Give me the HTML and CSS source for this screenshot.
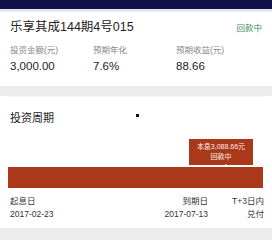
FILE: index.html
```html
<!DOCTYPE html>
<html lang="zh">
<head>
  <meta charset="UTF-8">
  <meta name="viewport" content="width=device-width, initial-scale=1.0">
  <title>乐享其成144期4号015</title>
  <link rel="stylesheet" href="styles.css">
</head>
<body>
  <div class="topbar"></div>

  <div class="card info">
    <div class="title-row">
      <h1>乐享其成144期4号015</h1>
      <span class="status">回款中</span>
    </div>
    <div class="stats">
      <div class="stat">
        <div class="label">投资金额(元)</div>
        <div class="value">3,000.00</div>
      </div>
      <div class="stat">
        <div class="label">预期年化</div>
        <div class="value">7.6%</div>
      </div>
      <div class="stat">
        <div class="label">预期收益(元)</div>
        <div class="value">88.66</div>
      </div>
    </div>
  </div>

  <div class="card period">
    <div class="period-head">
      <h2>投资周期</h2>
      <span class="dot"></span>
    </div>
    <div class="timeline">
      <div class="tip">本息3,088.66元<br>回款中</div>
      <div class="bar"></div>
    </div>
    <div class="dates">
      <div class="date">
        <div>起息日</div>
        <div>2017-02-23</div>
      </div>
      <div class="date end">
        <div>到期日</div>
        <div>2017-07-13</div>
      </div>
      <div class="date pay">
        <div>T+3日内</div>
        <div>兑付</div>
      </div>
    </div>
  </div>
</body>
</html>
```

FILE: styles.css
```css
body {
  margin: 0;
  background: #ececec;
  font-family: "Liberation Sans", "Noto Sans CJK SC", sans-serif;
  color: #222;
}
.topbar {
  height: 9px;
  background: #12124a;
  border-bottom: 2px solid #e4e4ec;
}
.card {
  background: #fff;
  padding: 0 10px;
}
.info {
  margin-top: 1px;
  height: 74px;
  margin-bottom: 10px;
}
.title-row {
  display: flex;
  justify-content: space-between;
  align-items: center;
  padding-top: 6px;
}
h1 {
  margin: 0;
  font-size: 12.5px;
  font-weight: normal;
  line-height: 18px;
}
.status {
  font-size: 8.5px;
  color: #3b8a5c;
}
.stats {
  display: grid;
  grid-template-columns: 83px 83px 1fr;
  margin-top: 8px;
}
.label {
  font-size: 8.5px;
  color: #888;
  line-height: 12px;
}
.value {
  font-size: 11.5px;
  line-height: 16px;
  margin-top: 2px;
}
.period {
  height: 132px;
  padding: 0 8px;
}
.period-head {
  display: flex;
  align-items: center;
  height: 40px;
  padding-left: 2px;
  border-top: 1px solid #f4f4f4;
}
h2 {
  margin: 0;
  font-size: 11px;
  font-weight: normal;
}
.dot {
  width: 3px;
  height: 3px;
  background: #111;
  margin-left: 82px;
  margin-top: -3px;
}
.timeline {
  display: flex;
  flex-direction: column;
  align-items: flex-end;
  margin-top: 2px;
}
.tip {
  position: relative;
  width: 64px;
  height: 26px;
  margin-right: 11px;
  background: #a9391a;
  color: #fbeee8;
  font-size: 7px;
  line-height: 10px;
  text-align: center;
  padding-top: 3px;
  box-sizing: border-box;
}
.tip::after {
  content: "";
  position: absolute;
  left: 34px;
  bottom: -2px;
  border-left: 3px solid transparent;
  border-right: 3px solid transparent;
  border-bottom: 3px solid #fff;
}
.bar {
  align-self: stretch;
  height: 21px;
  margin-top: 2px;
  margin-right: 1px;
  background: #a9391a;
}
.dates {
  display: flex;
  margin-top: 7px;
  font-size: 8.5px;
  line-height: 13px;
  color: #333;
  padding-left: 2px;
}
.date.end {
  margin-left: auto;
  text-align: right;
}
.date.pay {
  width: 56px;
  text-align: right;
}
```
